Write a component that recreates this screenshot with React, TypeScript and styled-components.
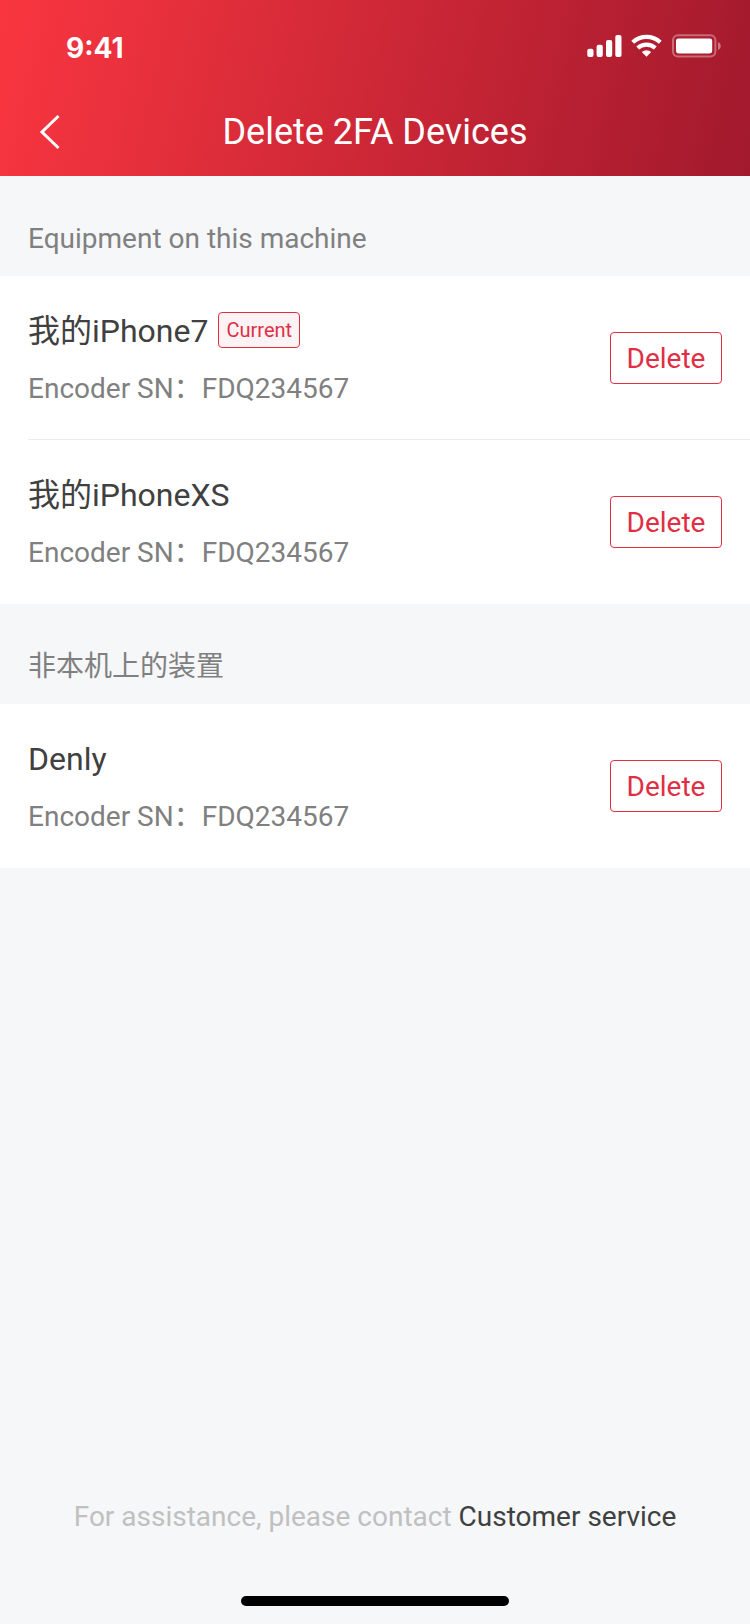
import React from 'react';
import styled, { createGlobalStyle } from 'styled-components';

const GlobalStyle = createGlobalStyle`
  *, *::before, *::after { box-sizing: border-box; }
  body {
    margin: 0;
    background: #f6f7f9;
    font-family: Roboto, "Noto Sans CJK SC", sans-serif;
    -webkit-font-smoothing: antialiased;
  }
  h1, h2, h3, p, ul { margin: 0; padding: 0; font-weight: 400; }
  ul { list-style: none; }
  button { font-family: inherit; cursor: pointer; }
`;

const Screen = styled.div`
  display: flex;
  flex-direction: column;
  min-height: 100vh;
`;

const Header = styled.header`
  background: linear-gradient(103deg, #f93640 0%, #a2192d 100%);
  color: #fff;
`;

const StatusBar = styled.div`
  display: flex;
  align-items: center;
  justify-content: space-between;
  height: 88px;
  padding: 4px 28px 0 66px;
`;

const Time = styled.time`
  padding-top: 4px;
  font: 700 28px/32px Inter, sans-serif;
`;

const StatusIcons = styled.svg`
  display: block;
  width: 136px;
  height: 24px;
`;

const NavBar = styled.div`
  display: grid;
  grid-template-columns: 100px 1fr 100px;
  align-items: center;
  height: 88px;
`;

const BackButton = styled.button`
  display: flex;
  align-items: center;
  height: 88px;
  padding: 0 0 0 38px;
  border: 0;
  background: none;
  color: inherit;
`;

const Title = styled.h1`
  font-size: 36px;
  line-height: 44px;
  text-align: center;
`;

const SectionTitle = styled.h2`
  display: flex;
  align-items: flex-end;
  height: 100px;
  padding: 0 28px 16px;
  font-size: 28px;
  line-height: 42px;
  color: #808080;
`;

const DeviceList = styled.ul`
  background: #fff;
`;

const DeviceRow = styled.li`
  display: flex;
  align-items: center;
  justify-content: space-between;
  height: 164px;
  margin-left: 28px;
  padding-right: 28px;

  &:not(:last-child) {
    border-bottom: 1px solid #ebebeb;
  }
`;

const NameLine = styled.div`
  display: flex;
  align-items: flex-start;
  gap: 10px;
  height: 48px;
`;

const DeviceName = styled.h3`
  font-size: 32px;
  line-height: 50px;
  color: #404040;
`;

const Badge = styled.span`
  height: 36px;
  margin-top: 6px;
  padding: 0 7px;
  border: 1px solid #e02f44;
  border-radius: 4px;
  background: #fdf2f4;
  font-size: 20px;
  line-height: 34px;
  color: #e02f44;
`;

const Serial = styled.p`
  margin-top: 14px;
  font-size: 28px;
  line-height: 42px;
  color: #808080;
`;

const DeleteButton = styled.button`
  width: 112px;
  height: 52px;
  padding: 2px 0 0;
  border: 1px solid #e02f44;
  border-radius: 4px;
  background: #fff;
  font-size: 28px;
  line-height: 48px;
  color: #e02f44;
`;

const Footer = styled.footer`
  display: flex;
  flex-direction: column;
  align-items: center;
  margin-top: auto;
  padding-bottom: 18px;
`;

const Help = styled.p`
  font-size: 28px;
  line-height: 42px;
  color: #c0c0c0;
`;

const HelpLink = styled.a`
  color: #404040;
  text-decoration: none;
`;

const HomeIndicator = styled.div`
  width: 268px;
  height: 10px;
  margin-top: 58px;
  border-radius: 5px;
  background: #000;
`;

type Device = { id: string; name: string; serial: string; current?: boolean };

const sections: { title: string; devices: Device[] }[] = [
  {
    title: 'Equipment on this machine',
    devices: [
      { id: 'a', name: '我的iPhone7', serial: 'FDQ234567', current: true },
      { id: 'b', name: '我的iPhoneXS', serial: 'FDQ234567' },
    ],
  },
  {
    title: '非本机上的装置',
    devices: [{ id: 'c', name: 'Denly', serial: 'FDQ234567' }],
  },
];

function Indicators() {
  return (
    <StatusIcons viewBox="0 0 136 24" fill="#fff" aria-hidden="true">
      <rect x="1.3" y="14.8" width="6.2" height="8.2" rx="2" />
      <rect x="10.6" y="10.8" width="6.2" height="12.2" rx="2" />
      <rect x="20" y="6" width="6.2" height="17" rx="2" />
      <rect x="29.3" y="1" width="6.2" height="22" rx="2" />
      <path d="M46.700 8.200a20.500 20.500 0 0 1 27.600 0" fill="none" stroke="#fff" strokeWidth="4.200" />
      <path d="M51.700 14a13.200 13.200 0 0 1 17.600 0" fill="none" stroke="#fff" strokeWidth="4.200" />
      <path d="M60.500 22.800l-4.700-4.700a7 7 0 0 1 9.400 0z" />
      <rect x="87" y="1.2" width="42.4" height="21.4" rx="5" fill="none" stroke="#fff" strokeOpacity="0.35" strokeWidth="2" />
      <rect x="90" y="4.4" width="36.2" height="15" rx="2.4" />
      <path d="M132 8v8c1.700-.7 2.800-2.200 2.800-4s-1.100-3.300-2.800-4z" fillOpacity="0.4" />
    </StatusIcons>
  );
}

export default function App() {
  return (
    <>
      <GlobalStyle />
      <Screen>
        <Header>
          <StatusBar>
            <Time>9:41</Time>
            <Indicators />
          </StatusBar>
          <NavBar>
            <BackButton type="button" aria-label="Back">
              <svg width="24" height="36" viewBox="0 0 24 36" fill="none" stroke="currentColor" strokeWidth="3">
                <path d="M20.500 2L4 18l16.500 16" />
              </svg>
            </BackButton>
            <Title>Delete 2FA Devices</Title>
          </NavBar>
        </Header>
        <main>
          {sections.map((section) => (
            <section key={section.title}>
              <SectionTitle>{section.title}</SectionTitle>
              <DeviceList>
                {section.devices.map((device) => (
                  <DeviceRow key={device.id}>
                    <div>
                      <NameLine>
                        <DeviceName>{device.name}</DeviceName>
                        {device.current && <Badge>Current</Badge>}
                      </NameLine>
                      <Serial>Encoder SN：{device.serial}</Serial>
                    </div>
                    <DeleteButton type="button">Delete</DeleteButton>
                  </DeviceRow>
                ))}
              </DeviceList>
            </section>
          ))}
        </main>
        <Footer>
          <Help>
            For assistance, please contact <HelpLink href="#service">Customer service</HelpLink>
          </Help>
          <HomeIndicator />
        </Footer>
      </Screen>
    </>
  );
}
